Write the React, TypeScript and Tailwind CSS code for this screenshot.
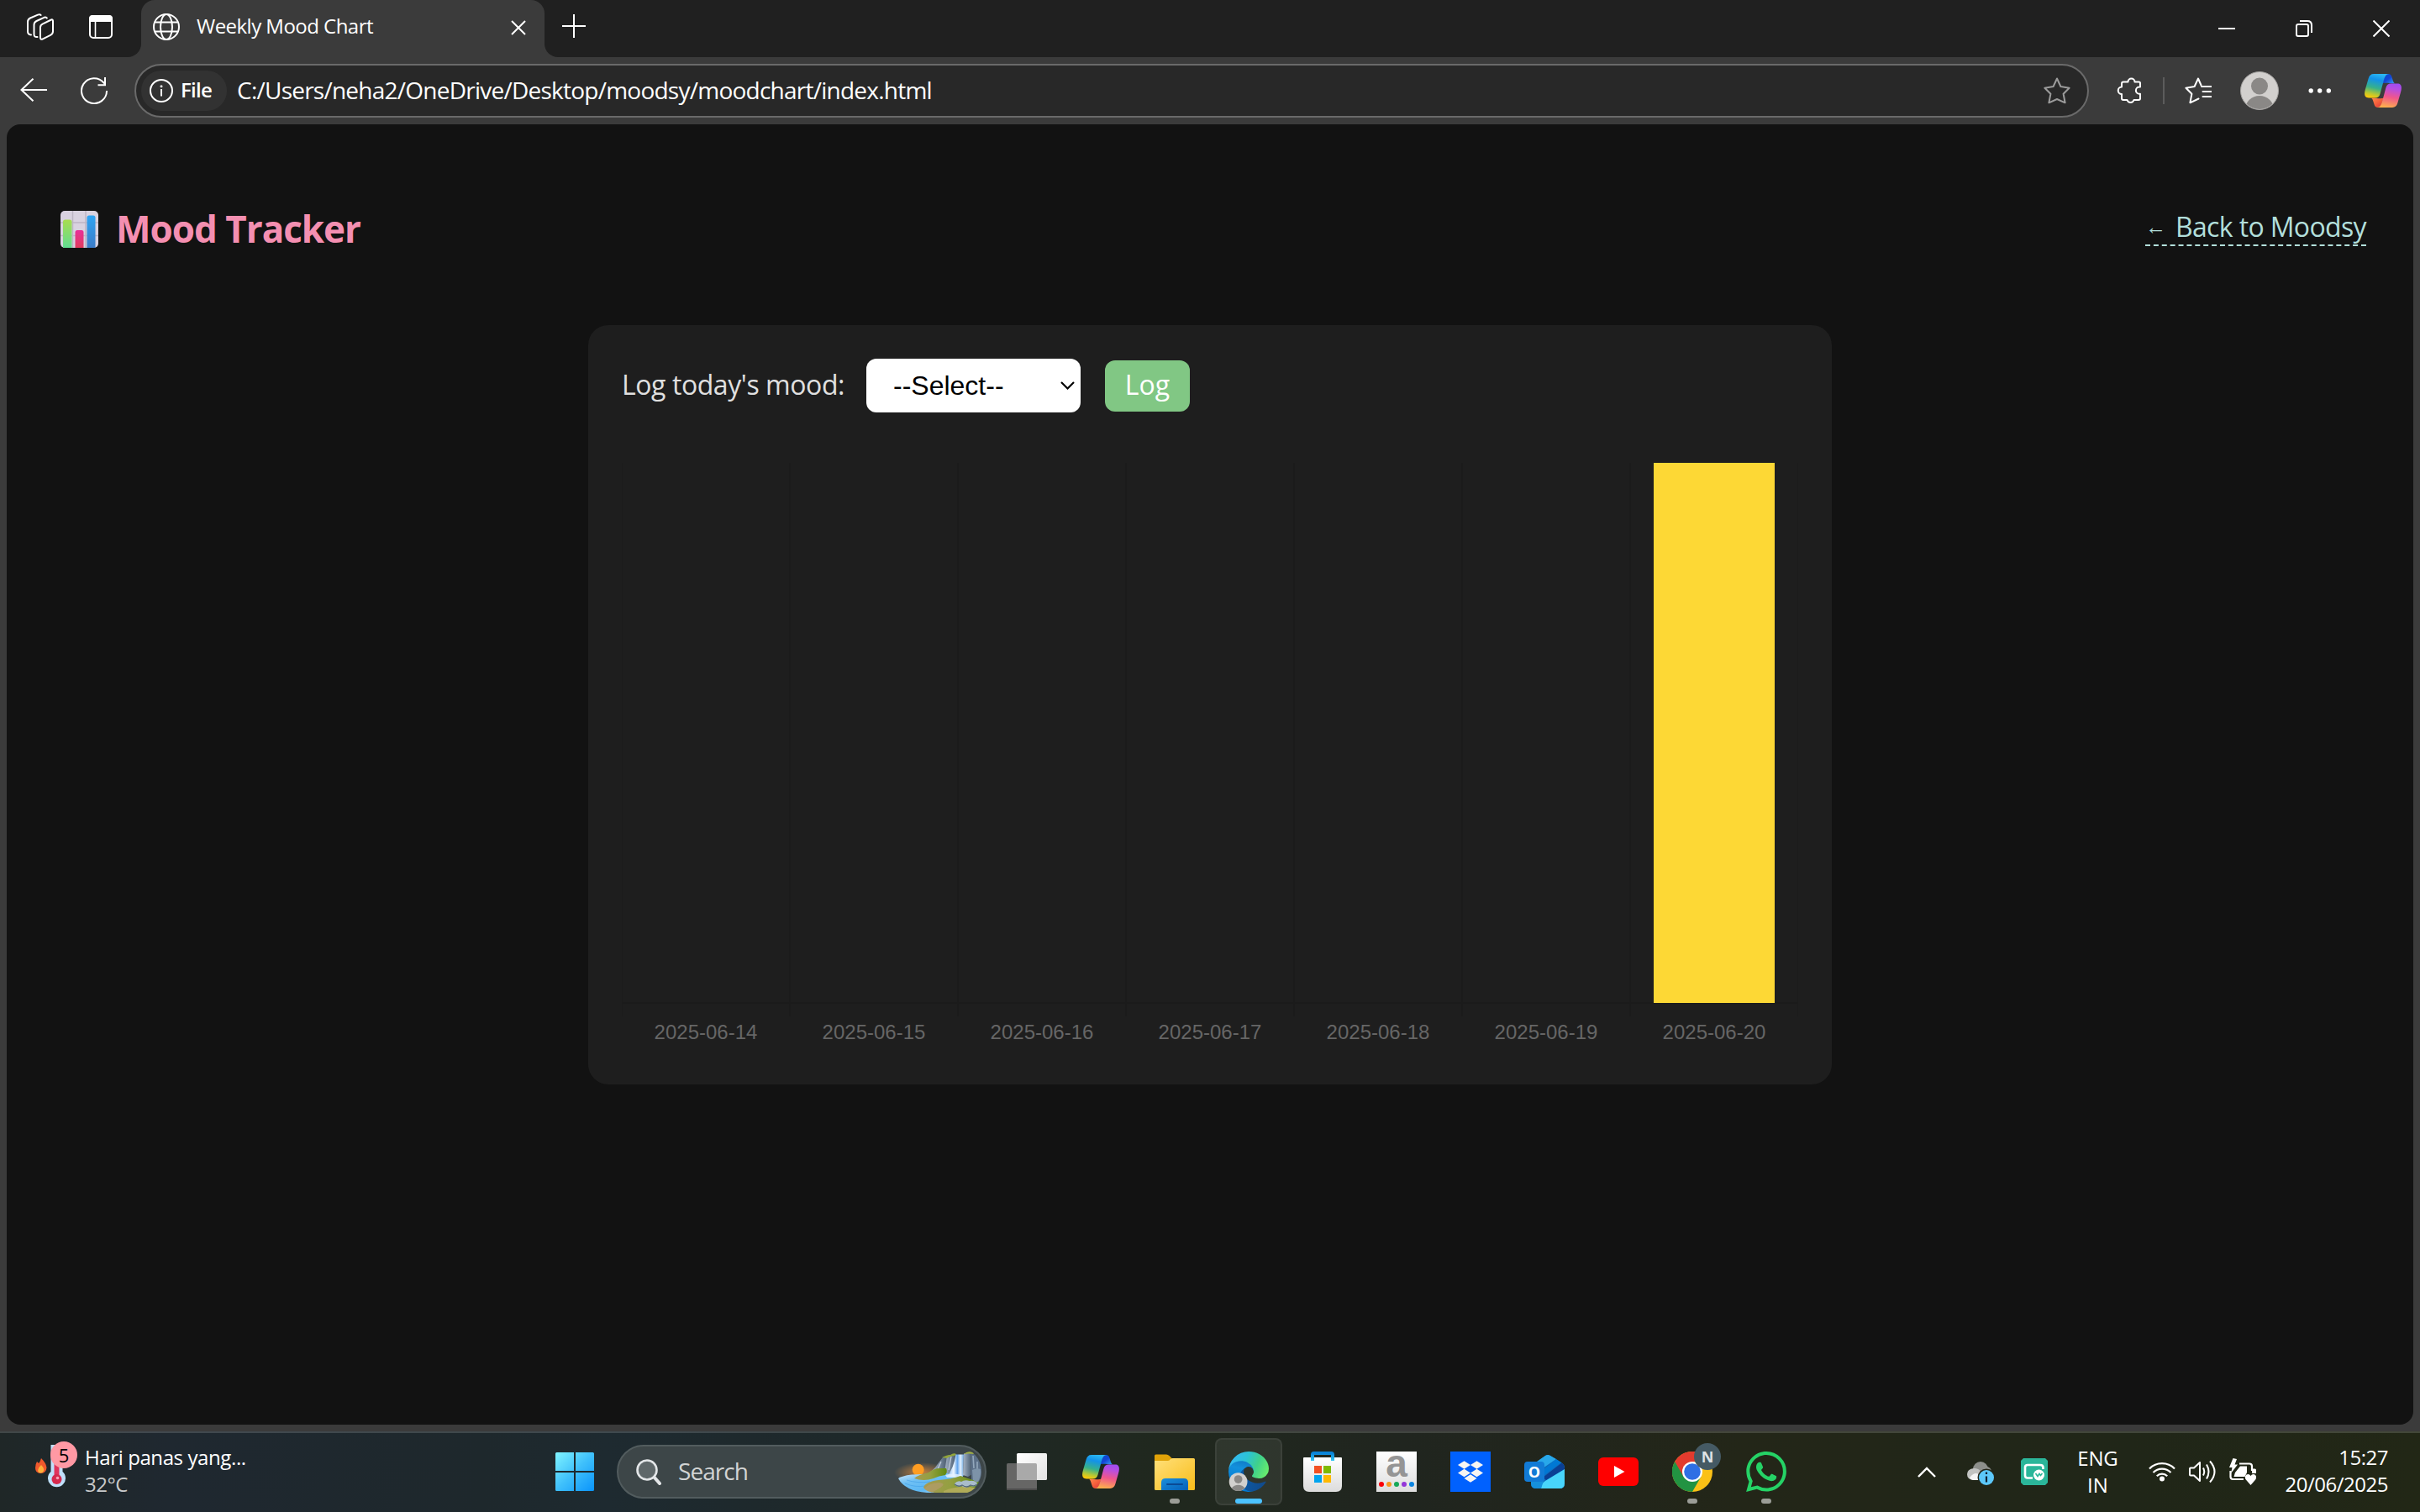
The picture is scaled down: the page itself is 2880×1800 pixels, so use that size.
import React from 'react';
import { SiDropbox, SiWhatsapp } from 'react-icons/si';

const days = [
  { date: '2025-06-14', level: 0 },
  { date: '2025-06-15', level: 0 },
  { date: '2025-06-16', level: 0 },
  { date: '2025-06-17', level: 0 },
  { date: '2025-06-18', level: 0 },
  { date: '2025-06-19', level: 0 },
  { date: '2025-06-20', level: 5 },
];

function CopilotLogo({ id, className }: { id: string; className: string }) {
  const lobe = 'M11 0C7.500 0 5.700 2 4.700 5.200L1 18C-.6 23.500-.6 28.400 5 28.400H12.500C16 28.400 17.600 26.600 18.600 23.400L22.500 9C23.800 4.200 25 0 29.500 0Z';
  const fold = 'M28 0C24.500 .2 23.200 5 21.500 11.200C25 10.200 31 11.500 36 11.300C34 10.300 33.800 7.500 32.600 4C31.800 1.500 30.800 0 28 0Z';
  return (
    <svg viewBox="0 0 44 40" className={className}>
      <defs>
        <linearGradient id={id + 'a'} x1="0.6" y1="0" x2="0.35" y2="1">
          <stop offset="0" stopColor="#2bb8f2" /><stop offset=".25" stopColor="#1392ea" /><stop offset=".6" stopColor="#37b18a" /><stop offset=".85" stopColor="#b9c832" /><stop offset="1" stopColor="#f8c80c" />
        </linearGradient>
        <linearGradient id={id + 'b'} x1="0" y1="0" x2="1" y2="1">
          <stop offset="0" stopColor="#0a4bc8" /><stop offset=".5" stopColor="#1446d6" /><stop offset="1" stopColor="#3aa5f5" />
        </linearGradient>
        <linearGradient id={id + 'c'} x1="0.4" y1="1" x2="0.6" y2="0">
          <stop offset="0" stopColor="#a24cf0" /><stop offset=".2" stopColor="#b84ee0" /><stop offset=".55" stopColor="#f0568c" /><stop offset="1" stopColor="#fdb04c" />
        </linearGradient>
        <linearGradient id={id + 'd'} x1="0" y1="0" x2="1" y2="1">
          <stop offset="0" stopColor="#d8303c" /><stop offset=".5" stopColor="#f4603c" /><stop offset="1" stopColor="#ff8a50" />
        </linearGradient>
      </defs>
      <path d={fold} fill={`url(#${id}b)`} />
      <path d={fold} fill={`url(#${id}d)`} transform="rotate(180 22 20)" />
      <path d={lobe} fill={`url(#${id}a)`} />
      <path d={lobe} transform="rotate(180 22 20)" fill={`url(#${id}c)`} />
    </svg>
  );
}

function TabStrip() {
  return (
    <div className="flex h-[68px] shrink-0 bg-[#202020] text-white">
      <div className="flex w-[168px] items-start pl-8 pt-4">
        <svg viewBox="0 0 32 32" className="h-8 w-8 shrink-0" fill="none" stroke="#fff" strokeWidth="2" strokeLinejoin="round" strokeLinecap="round">
          <path d="M29 7.500L19 12.400Q16 13.800 16 16.500V28.500Q16 32 19 30.300L28 25.800Q31 24.300 31 21.500V9Q31 6.600 29 7.500Z" />
          <path d="M12.500 28Q8.500 28.500 8.500 25V13.500Q8.500 10.500 11.500 9L20.500 4.800Q23 3.800 23.800 5.500" />
          <path d="M5 25.500Q1 25 1 21.500V10Q1 7 4 5.500L13 1.600Q15.500.6 16.600 2" />
        </svg>
        <svg viewBox="0 0 28 28" className="ml-[42px] mt-0.5 h-7 w-7 shrink-0" fill="none" stroke="#fff" strokeWidth="2">
          <rect x="1" y="1" width="26" height="26" rx="4" />
          <path d="M1 4Q1 1 4 1H24Q27 1 27 4V7H1Z" fill="#fff" />
          <path d="M7.500 7V27" strokeWidth="1.600" />
        </svg>
      </div>
      <div className="relative flex w-[480px] items-center rounded-t-2xl bg-[#3b3b3b] pb-1 pl-[14px]">
        <span className="absolute -left-4 bottom-0 h-4 w-4 bg-[#3b3b3b]"><span className="block h-4 w-4 rounded-br-2xl bg-[#202020]" /></span>
        <span className="absolute -right-4 bottom-0 h-4 w-4 bg-[#3b3b3b]"><span className="block h-4 w-4 rounded-bl-2xl bg-[#202020]" /></span>
        <svg viewBox="0 0 32 32" className="h-8 w-8 shrink-0" fill="none" stroke="#fff" strokeWidth="2">
          <circle cx="16" cy="16" r="15" />
          <ellipse cx="16" cy="16" rx="7" ry="15" />
          <path d="M2.500 10.500H29.500M2.500 21.500H29.500" />
        </svg>
        <span className="ml-5 whitespace-nowrap pb-[3px] text-[24px] leading-8 tracking-[-0.53px]">Weekly Mood Chart</span>
        <svg viewBox="0 0 18 18" className="ml-auto mr-[22px] mt-0.5 h-[18px] w-[18px]" stroke="#fff" strokeWidth="2"><path d="M1 1L17 17M17 1L1 17" /></svg>
      </div>
      <svg viewBox="0 0 28 28" className="ml-[21px] mt-[17px] h-7 w-7" stroke="#fff" strokeWidth="2"><path d="M14 0V28M0 14H28" /></svg>
      <div className="ml-auto mr-9 flex items-center gap-[72px]">
        <svg viewBox="0 0 20 20" className="h-5 w-5" stroke="#fff" strokeWidth="2"><path d="M0 10H20" /></svg>
        <svg viewBox="0 0 20 20" className="h-5 w-5" fill="none" stroke="#fff" strokeWidth="2">
          <rect x="1" y="5" width="14" height="14" rx="2" />
          <path d="M5 1.100H14Q19 1.100 19 6V15" />
        </svg>
        <svg viewBox="0 0 20 20" className="h-5 w-5" stroke="#fff" strokeWidth="2"><path d="M.5 .5L19.500 19.500M19.500 .5L.5 19.500" /></svg>
      </div>
    </div>
  );
}

function Toolbar() {
  return (
    <div className="flex h-20 shrink-0 items-center bg-[#3b3b3b] pl-6 text-white">
      <svg viewBox="0 0 32 28" className="mt-[-2px] h-7 w-8 shrink-0" fill="none" stroke="#fff" strokeWidth="2"><path d="M15.500 .7L1.500 14L15.500 27.300M1.500 14H32" /></svg>
      <svg viewBox="0 0 32 32" className="ml-10 h-8 w-8 shrink-0" fill="none" stroke="#fff" strokeWidth="2"><path d="M31 16A15 15 0 1 1 27.500 6.500L29 8.500M29 0V9.300H20.500" /></svg>
      <div className="ml-8 flex h-16 w-[2326px] shrink-0 items-center rounded-full border-2 border-[#6a6a6a] bg-[#282828] pl-1.5">
        <div className="flex h-12 w-[102px] items-center rounded-full bg-[#323232] pl-2.5">
          <svg viewBox="0 0 28 28" className="h-7 w-7 shrink-0" fill="none" stroke="#fff" strokeWidth="2"><circle cx="14" cy="14" r="13" /><path d="M14 12V20.500" /><circle cx="14" cy="8.800" r=".5" /></svg>
          <span className="ml-[9px] whitespace-nowrap pb-[3px] text-[24px] font-semibold leading-8 tracking-[-0.75px]">File</span>
        </div>
        <span className="ml-3 whitespace-nowrap pb-[3px] text-[28px] leading-9 tracking-[-0.76px]">C:/Users/neha2/OneDrive/Desktop/moodsy/moodchart/index.html</span>
        <svg viewBox="0 0 32 32" className="ml-auto mr-5 h-8 w-8" fill="none" stroke="#9b9b9b" strokeWidth="2" strokeLinejoin="round">
          <path d="M16 1.500L20.400 11L30.600 12.700L23.600 19.800L25.600 30.300L16 26L6.400 30.300L8.400 19.800L1.400 12.700L11.600 11Z" />
        </svg>
      </div>
      <svg viewBox="0 0 32 32" className="ml-8 h-8 w-8 shrink-0" fill="none" stroke="#fff" strokeWidth="2" strokeLinejoin="round">
        <path d="M7 11.500V7.500a2 2 0 0 1 2-2h5.500a4 4 0 0 1 8 0h5a1.500 1.500 0 0 1 1.500 1.500v4.600h-1a4.100 4.100 0 0 0 0 8.200h1v5.200a2 2 0 0 1-2 2h-5.500a4.200 4.200 0 0 1-8 0H9a2 2 0 0 1-2-2v-5a4.100 4.100 0 0 1 0-8.500z" />
      </svg>
      <div className="ml-6 h-8 w-0.5 shrink-0 bg-[#5c5c5c]" />
      <svg viewBox="0 0 32 32" className="ml-6 h-8 w-8 shrink-0" fill="none" stroke="#fff" strokeWidth="2" strokeLinejoin="round" strokeLinecap="round">
        <path d="M19.500 9.500L16 1.500L11.600 11L1.400 12.700L8.400 19.800L6.400 30.300L16.500 25.500" />
        <path d="M20 11H31.500M21.500 17H31.500M21.500 23H31.500" />
      </svg>
      <svg viewBox="0 0 46 46" className="ml-[34px] h-[46px] w-[46px] shrink-0">
        <defs><clipPath id="pf"><circle cx="23" cy="23" r="22" /></clipPath></defs>
        <circle cx="23" cy="23" r="22.500" fill="#d2d0ce" stroke="#a5a3a1" />
        <g clipPath="url(#pf)" fill="#8a8886"><circle cx="23" cy="17.500" r="10" /><ellipse cx="23" cy="45" rx="17" ry="16" /></g>
      </svg>
      <svg viewBox="0 0 28 8" className="ml-[35px] h-2 w-7 shrink-0" fill="#fff"><circle cx="3.200" cy="4" r="2.700" /><circle cx="13.700" cy="4" r="2.700" /><circle cx="24.300" cy="4" r="2.700" /></svg>
      <CopilotLogo id="tc" className="ml-[39px] h-10 w-11 shrink-0" />
    </div>
  );
}

function ChartEmoji() {
  return (
    <svg viewBox="0 0 45 44" className="h-11 w-[45px] shrink-0">
      <defs>
        <linearGradient id="eg" x1="0" y1="0" x2="0" y2="1"><stop offset="0" stopColor="#a8dc50" /><stop offset="1" stopColor="#62dc92" /></linearGradient>
        <linearGradient id="er" x1="0" y1="0" x2="0" y2="1"><stop offset="0" stopColor="#e8309a" /><stop offset="1" stopColor="#e03c5c" /></linearGradient>
        <linearGradient id="eb" x1="0" y1="0" x2="0" y2="1"><stop offset="0" stopColor="#2ea4f4" /><stop offset="1" stopColor="#3c7cc8" /></linearGradient>
      </defs>
      <rect width="45" height="44" rx="5" fill="#d9d2e0" />
      <path d="M14.500 0V44M30 0V44M0 14H45M0 29.500H45" stroke="#bdb5c4" strokeWidth="1.500" />
      <path d="M3 44V13Q3 10.500 5.500 10.500H11Q13.500 10.500 13.500 13V44Z" fill="url(#eg)" />
      <path d="M17.500 44V25.500Q17.500 23 20 23H25Q27.500 23 27.500 25.500V44Z" fill="url(#er)" />
      <path d="M31.500 44V8Q31.500 5.500 34 5.500H39Q41.500 5.500 41.500 8V44Z" fill="url(#eb)" />
    </svg>
  );
}

function MoodCard() {
  return (
    <section className="mx-auto mt-[87px] h-[904px] w-[1480px] shrink-0 rounded-3xl bg-[#1e1e1e] px-10 pt-10">
      <div className="flex h-16 items-center">
        <span className="whitespace-nowrap pb-0.5 text-[32px] leading-10 tracking-[-0.43px] text-[#e0e0e0]">Log today's mood:</span>
        <div className="ml-auto flex h-16 w-[255px] shrink-0 items-center rounded-xl bg-white pl-8 pr-[7px] font-['Liberation_Sans',Arial,sans-serif] text-[32px] leading-10 text-black">
          <span>--Select--</span>
          <svg viewBox="0 0 17 10" className="ml-auto h-2.5 w-[17px]" fill="none" stroke="#000" strokeWidth="2.200"><path d="M1 1L8.500 8.500L16 1" /></svg>
        </div>
        <button className="ml-[29px] mr-[724px] flex h-[61px] w-[101px] shrink-0 items-center justify-center rounded-xl bg-[#81c784] pb-0.5 text-[32px] leading-10 text-white">Log</button>
      </div>
      <div className="mt-[60px] flex h-[644px] w-[1400px] items-start border-b-2 border-l border-[#1b1b1b]">
        {days.map((d) => (
          <div key={d.date} className="flex h-[643px] w-[200px] shrink-0 items-end justify-center border-r-2 border-[#1b1b1b] last:w-[199px] last:border-r">
            <div className="w-36 bg-[#fdd835]" style={{ height: `${d.level * 20}%` }} />
          </div>
        ))}
      </div>
      <div className="flex h-[15px] w-[1400px] border-l border-[#1b1b1b]">
        {days.map((d) => <div key={d.date} className="w-[200px] shrink-0 border-r-2 border-[#1b1b1b] last:w-[199px] last:border-r" />)}
      </div>
      <div className="mt-[5px] flex font-['Liberation_Sans',Arial,sans-serif] text-[24px] leading-7 text-[#666]">
        {days.map((d) => <span key={d.date} className="w-[200px] shrink-0 text-center">{d.date}</span>)}
      </div>
    </section>
  );
}

function WaterfallArt() {
  return (
    <svg viewBox="0 0 101 49" className="h-[49px] w-[101px] overflow-visible">
      <defs>
        <radialGradient id="wg"><stop offset="0" stopColor="#ff9a3c" stopOpacity=".7" /><stop offset="1" stopColor="#ff9a3c" stopOpacity="0" /></radialGradient>
        <linearGradient id="wr" x1="0" y1="0" x2=".8" y2="1"><stop offset="0" stopColor="#d3e8fa" /><stop offset=".35" stopColor="#6fc0f4" /><stop offset=".7" stopColor="#5cb8f4" /><stop offset="1" stopColor="#b4ddf8" /></linearGradient>
        <linearGradient id="wf" x1="0" y1="0" x2="1" y2="0"><stop offset="0" stopColor="#7db6f0" /><stop offset=".4" stopColor="#eef7ff" /><stop offset=".62" stopColor="#62a4ec" /><stop offset=".8" stopColor="#e4f2ff" /><stop offset="1" stopColor="#6aa6e0" /></linearGradient>
        <linearGradient id="wk" x1="0" y1="0" x2="1" y2="0"><stop offset="0" stopColor="#a9b6c6" /><stop offset=".5" stopColor="#74869a" /><stop offset="1" stopColor="#48586a" /></linearGradient>
        <linearGradient id="wl" x1="0" y1="0" x2="1" y2="0"><stop offset="0" stopColor="#a89a52" /><stop offset=".5" stopColor="#93a040" /><stop offset="1" stopColor="#5f8a10" /></linearGradient>
      </defs>
      <ellipse cx="30" cy="25" rx="33" ry="12" fill="url(#wg)" />
      <circle cx="25.700" cy="21.700" r="7" fill="#ff9d22" />
      <path d="M2 32Q6 29 18 27.500L60 26H82L70 38L44 49H36Q10 47 2 32Z" fill="url(#wr)" />
      <path d="M12 34Q24 38 40 36M10 38Q22 43 34 41" stroke="#3f9fe8" strokeWidth="1" fill="none" opacity=".6" />
      <path d="M42 23L46 19L51 12L55 7L61 6L60 16L58 24Z" fill="url(#wk)" />
      <path d="M57 25L60 5L71 3V14L66 28Z" fill="url(#wk)" />
      <path d="M53 12L49 21M65 6L62 22" stroke="#c0cbd8" strokeWidth="1.300" />
      <path d="M54 7Q60 4 64 4Q68 1 71 3L69 5Q62 6 60 8Z" fill="#93a63a" />
      <path d="M70.500 3.500H80L79 30H60Q68 20 70.500 3.500Z" fill="url(#wf)" />
      <path d="M58 28Q66 25 78 28L76 31H60Z" fill="#e6f3ff" opacity=".8" />
      <path d="M80 2.500L90 1.500V27L85 30L79 28Z" fill="url(#wk)" />
      <path d="M89 3L93 3.500Q101 12 101 24Q101 32 96 39L89 34Z" fill="#5c7088" />
      <path d="M91 5L92 20M96 12L96 22" stroke="#93a8bc" strokeWidth="1.600" />
      <path d="M80 3Q85-1.500 91 1.500L92 3L86 2.500Z" fill="#a4b246" />
      <path d="M21 32Q25 28 38 25Q45 20 51 20L59 20Q61 24 58 28Q50 29 44 32Q32 36 21 32Z" fill="url(#wl)" />
      <path d="M32 43Q34 36 50 34Q66 33 76 29L88 33L98 36Q94 45 84 49H46Q36 48 32 43Z" fill="url(#wl)" />
      <path d="M33 44Q38 38 50 37Q60 38 52 43Q46 47 42 48.500Q35 47 33 44Z" fill="#b09c68" opacity=".8" />
      <path d="M56 47Q72 40 94 43Q90 47 84 49H56Z" fill="#b0ab58" />
      <path d="M90 22Q95 19 100 21Q101 31 96 37L91 34Z" fill="#7d93a8" />
      <path d="M69 38Q73 34 77 36Q81 33 87 35Q93 34 96 38Q95 43 88 41Q82 44 77 41Q70 43 69 38Z" fill="#a9bccb" />
      <path d="M69 39Q74 43 78 40Q84 44 88 40Q93 42 95.500 39" stroke="#55697a" strokeWidth="1.300" fill="none" />
    </svg>
  );
}

function EdgeLogo() {
  return (
    <svg viewBox="0 0 256 256" className="h-12 w-12">
      <defs>
        <linearGradient id="e1" x1=".2" y1=".5" x2="1" y2=".7"><stop offset="0" stopColor="#0c59a4" /><stop offset="1" stopColor="#114a8b" /></linearGradient>
        <linearGradient id="e2" x1=".6" y1="0" x2=".4" y2="1"><stop offset="0" stopColor="#1077c4" /><stop offset=".3" stopColor="#1390dc" /><stop offset=".7" stopColor="#0680d7" /><stop offset="1" stopColor="#0078d4" /></linearGradient>
        <linearGradient id="e3" x1="0" y1=".3" x2="1" y2=".6"><stop offset="0" stopColor="#35b9f8" /><stop offset=".4" stopColor="#2cc3d5" /><stop offset=".7" stopColor="#3fd08c" /><stop offset="1" stopColor="#66eb6e" /></linearGradient>
      </defs>
      <path fill="url(#e1)" d="M231 190.500c-3.400 1.800-6.900 3.400-10.500 4.700a101.500 101.500 0 0 1-35.900 6.400c-47.300 0-88.500-32.500-88.500-74.300a31.500 31.500 0 0 1 16.400-27.300c-42.800 1.800-53.800 46.400-53.800 72.500 0 74 68.100 81.400 82.800 81.400 7.900 0 19.800-2.300 27-4.600l1.300-.4a128.300 128.300 0 0 0 66.600-52.800 4 4 0 0 0-5.400-5.600Z" />
      <path fill="url(#e2)" d="M105.700 241.400a79.200 79.200 0 0 1-22.700-21.300 80.700 80.700 0 0 1 29.500-120c3.200-1.500 8.500-4.100 15.600-4a32.400 32.400 0 0 1 25.700 13 31.900 31.900 0 0 1 6.300 18.700c0-.2 24.500-79.600-80-79.600-43.900 0-80 41.600-80 78.200a130.200 130.200 0 0 0 12.100 56 128 128 0 0 0 156.400 67 75.500 75.500 0 0 1-62.800-8Z" />
      <path fill="url(#e3)" d="M152.300 148.900c-.9 1-3.400 2.500-3.400 5.600 0 2.600 1.700 5.200 4.800 7.300 14.300 10 41.400 8.600 41.500 8.600a59.600 59.600 0 0 0 30.300-8.300 61.400 61.400 0 0 0 30.400-52.900c.3-22.400-8-37.300-11.300-43.900C223.500 23.900 177.700 0 128 0A128 128 0 0 0 0 126.200c.5-36.500 36.800-66 80-66 3.500 0 23.500.3 42 10a72.600 72.600 0 0 1 30.900 29.300c6.100 10.600 7.200 24.100 7.200 29.500s-2.700 13.300-7.800 19.900Z" />
      <circle cx="62" cy="192" r="58" fill="#d2d0ce" />
      <circle cx="62" cy="176" r="26" fill="#8a8886" />
      <path d="M20 232A50 44 0 0 1 104 232A58 58 0 0 1 20 232Z" fill="#8a8886" />
    </svg>
  );
}

function TaskIcon({ children, mark = 'none' }: { children: React.ReactNode; mark?: 'none' | 'open' | 'active' }) {
  return (
    <div className={`relative flex h-20 w-20 shrink-0 items-center justify-center rounded-lg ${mark === 'active' ? 'border-2 border-white/[0.06] bg-white/[0.07]' : ''}`}>
      {children}
      {mark === 'open' && <span className="absolute left-[34px] top-[72px] h-1.5 w-3 rounded-full bg-[#9b9d97]" />}
      {mark === 'active' && <span className="absolute left-[22px] top-[70px] h-1.5 w-8 rounded-full bg-[#4cc2ff]" />}
    </div>
  );
}

function TaskIcons() {
  return (
    <div className="ml-2 flex gap-2">
      <TaskIcon>
        <svg viewBox="0 0 48 48" className="h-12 w-12">
          <defs><linearGradient id="tv" x1="0" y1="0" x2="1" y2="1"><stop offset="0" stopColor="#fff" /><stop offset="1" stopColor="#e2e2e2" /></linearGradient></defs>
          <rect x="0" y="14" width="36" height="32" rx="1.500" fill="#666665" />
          <rect x="12" y="2" width="36" height="32" rx="1.500" fill="url(#tv)" />
          <path d="M12 14H34.500Q36 14 36 15.500V34H13.500Q12 34 12 32.500Z" fill="#a9a9a9" />
          <path d="M0 45H36" stroke="#4c4c4c" strokeWidth="2" />
        </svg>
      </TaskIcon>
      <TaskIcon><CopilotLogo id="bc" className="h-10 w-11" /></TaskIcon>
      <TaskIcon mark="open">
        <svg viewBox="0 0 48 48" className="h-12 w-12">
          <defs>
            <linearGradient id="fo" x1="0" y1="0" x2="1" y2="1"><stop offset="0" stopColor="#ffe07a" /><stop offset="1" stopColor="#f9bd1a" /></linearGradient>
            <linearGradient id="fb" x1="0" y1="0" x2="1" y2="1"><stop offset="0" stopColor="#1a8fdc" /><stop offset="1" stopColor="#0560b8" /></linearGradient>
          </defs>
          <path d="M0 5Q0 3.500 1.500 3.500H14Q16 3.500 17.500 5L21 8.500V14H0Z" fill="#e0a208" />
          <path d="M0 11H15.500Q17.500 11 18.500 9.500Q19.500 8 21.500 8H46.500Q48 8 48 9.500V44.500Q48 46 46.500 46H1.500Q0 46 0 44.500Z" fill="url(#fo)" />
          <path d="M8 46V37Q8 32 13 32H35Q40 32 40 37V46Z" fill="url(#fb)" />
          <path d="M15 39H33" stroke="#0a4a94" strokeWidth="2" strokeLinecap="round" />
        </svg>
      </TaskIcon>
      <TaskIcon mark="active"><EdgeLogo /></TaskIcon>
      <TaskIcon>
        <svg viewBox="0 0 48 48" className="h-12 w-12">
          <defs>
            <linearGradient id="st" x1="0" y1="0" x2="0" y2="1"><stop offset="0" stopColor="#fff" /><stop offset="1" stopColor="#dcdcdc" /></linearGradient>
            <linearGradient id="sh" x1="0" y1="0" x2="0" y2="1"><stop offset="0" stopColor="#0a84d8" /><stop offset="1" stopColor="#35c8f4" /></linearGradient>
          </defs>
          <path d="M1 8Q1 7 2 7H46Q47 7 47 8V41Q47 48 40 48H8Q1 48 1 41Z" fill="url(#st)" />
          <path d="M12 11V3.500Q12 2 13.500 2H34.500Q36 2 36 3.500V11" fill="none" stroke="url(#sh)" strokeWidth="4" />
          <rect x="14" y="17" width="9" height="9" fill="#f25022" /><rect x="25" y="17" width="9" height="9" fill="#7fba00" />
          <rect x="14" y="28" width="9" height="9" fill="#00a4ef" /><rect x="25" y="28" width="9" height="9" fill="#ffb900" />
        </svg>
      </TaskIcon>
      <TaskIcon>
        <div className="flex h-12 w-12 flex-col items-center bg-gradient-to-b from-white to-[#dedede]">
          <span className="h-[36px] font-['Liberation_Sans',Arial,sans-serif] text-[46px] font-bold leading-[28px] text-[#959595]">a</span>
          <div className="flex gap-[3px]">
            <i className="h-1.5 w-1.5 rounded-full bg-[#fb0007]" /><i className="h-1.5 w-1.5 rounded-full bg-[#f8981d]" /><i className="h-1.5 w-1.5 rounded-full bg-[#17a858]" /><i className="h-1.5 w-1.5 rounded-full bg-[#9437d8]" /><i className="h-1.5 w-1.5 rounded-full bg-[#0b84e0]" />
          </div>
        </div>
      </TaskIcon>
      <TaskIcon><div className="flex h-12 w-12 items-center justify-center bg-[#0061fe]"><SiDropbox className="h-[30px] w-[30px] text-[#f7f5f2]" /></div></TaskIcon>
      <TaskIcon>
        <div className="relative h-12 w-12">
          <svg viewBox="0 0 48 48" className="h-12 w-12">
            <path d="M8 17L25 5Q28 3 31 5L44 13Q48 15.500 48 19V38Q48 44 42 44H14Q8 44 8 38Z" fill="#0f6cbd" />
            <path d="M8 17L25 5Q28 3 31 5L38 9L16 24H8Z" fill="#28a8ea" />
            <path d="M20 24L38 9L44 13L24 28Z" fill="#0078d4" />
            <path d="M22 31L44.500 13.500Q48 15.500 48 21L26 34Z" fill="#0a3f94" />
            <path d="M48 21V38Q48 44 42 44H20Q20 38 25 35Z" fill="#48d5fb" />
            <path d="M8 32H24L20 44H14Q8 44 8 38Z" fill="#1590dc" />
          </svg>
          <span className="absolute left-0 top-3 flex h-6 w-6 items-center justify-center rounded-sm bg-[#127bd6] text-[18px] font-bold leading-none">O</span>
        </div>
      </TaskIcon>
      <TaskIcon>
        <svg viewBox="0 0 48 48" className="h-12 w-12"><rect y="7" width="48" height="34" rx="6" fill="#f00" /><path d="M19 17L31.500 24L19 31Z" fill="#fff" /></svg>
      </TaskIcon>
      <TaskIcon mark="open">
        <svg viewBox="0 0 48 48" className="h-12 w-12">
          <circle cx="24" cy="24" r="24" fill="#fbc116" />
          <path d="M24 24L3.200 12A24 24 0 0 0 24 48L34.400 30Z" fill="#229342" />
          <path d="M3.200 12A24 24 0 0 1 44.800 12H24L13.600 30Z" fill="#e33b2e" />
          <circle cx="24" cy="24" r="12" fill="#fff" /><circle cx="24" cy="24" r="9.800" fill="#2f6fe4" />
        </svg>
        <span className="absolute left-[42px] top-[6px] flex h-8 w-8 items-center justify-center rounded-full bg-[#455a64] text-[18px] font-bold leading-none text-[#dfe3e6]">N</span>
      </TaskIcon>
      <TaskIcon mark="open"><SiWhatsapp className="h-12 w-12 text-[#25d366]" /></TaskIcon>
    </div>
  );
}

function Taskbar() {
  return (
    <div className="flex h-24 shrink-0 items-center border-t-2 border-white/15 bg-[linear-gradient(90deg,#1f2727_0%,#1f2830_7%,#1e282c_20%,#1e2a30_25%,#1e2829_36%,#20281e_48%,#20251f_58%,#232618_72%,#202618_88%,#222716_100%)] pb-0.5 text-white">
      <div className="relative mb-5 ml-[42px] h-[60px] w-[59px] shrink-0">
        <svg viewBox="0 0 48 60" className="h-[60px] w-12">
          <path d="M7 24Q13 30 13.500 35Q13 42 6.500 42Q0 42 0 35.500Q0 31 2 28L4 30Q6 28 7 24Z" fill="#f0592c" />
          <path d="M7 32Q11 36 10 39Q9 41.500 6.500 41.500Q3 41.500 3.200 38Q3.500 35 7 32Z" fill="#ffb03a" />
          <path d="M18.500 8H32.500V40A10.500 10.500 0 1 1 18.500 40Z" fill="#bfe0fb" />
          <path d="M22.500 20H28.500V44H22.500Z" fill="#e0335c" /><circle cx="25.500" cy="49" r="6" fill="#d5294e" /><circle cx="26.500" cy="47.500" r="1.800" fill="#f7a0b4" />
        </svg>
        <span className="absolute left-[18px] top-[4px] flex h-8 w-8 items-center justify-center rounded-full bg-[#ff99a4] text-[22px] leading-none text-black">5</span>
      </div>
      <div className="mb-[3px] flex w-[560px] flex-col text-[24px] leading-8">
        <span className="whitespace-nowrap tracking-[-0.4px]">Hari panas yang...</span>
        <span className="tracking-[-0.46px] text-[#c8cacb]">32°C</span>
      </div>
      <svg viewBox="0 0 46 46" className="h-[46px] w-[46px] shrink-0">
        <defs><linearGradient id="wn" gradientUnits="userSpaceOnUse" x1="0" y1="0" x2="46" y2="46"><stop offset="0" stopColor="#80f4ff" /><stop offset=".5" stopColor="#3fc0fb" /><stop offset="1" stopColor="#0a94fb" /></linearGradient></defs>
        <path d="M1.500 0H22V22H0V1.500Q0 0 1.500 0ZM24 0H44.500Q46 0 46 1.500V22H24ZM0 24H22V46H1.500Q0 46 0 44.500ZM24 24H46V44.500Q46 46 44.500 46H24Z" fill="url(#wn)" />
      </svg>
      <div className="ml-[27px] flex h-16 w-[440px] shrink-0 items-center rounded-full border-2 border-[#525c5e] bg-[#3d4648] pl-[21px]">
        <svg viewBox="0 0 30 32" className="h-8 w-[30px]" fill="#5f686a" stroke="#e3e6e8"><path d="M21 22L28 30" strokeWidth="4" strokeLinecap="round" /><circle cx="13" cy="14" r="11.500" strokeWidth="2.600" /></svg>
        <span className="mb-0.5 ml-5 text-[28px] leading-9 tracking-[-0.94px] text-[#d2d4d4]">Search</span>
        <div className="ml-auto mr-1"><WaterfallArt /></div>
      </div>
      <TaskIcons />
      <div className="ml-auto flex h-full items-center">
        <svg viewBox="0 0 22 13" className="h-[13px] w-[22px]" fill="none" stroke="#fff" strokeWidth="2.400"><path d="M1 12L11 2L21 12" /></svg>
        <svg viewBox="0 0 32 28" className="ml-[37px] mt-1 h-7 w-8">
          <circle cx="16" cy="9" r="9" fill="#8d8f8b" /><circle cx="23" cy="12" r="6" fill="#8d8f8b" />
          <path d="M8 8Q14 7 18 14L14 22H7Q0 21 0 15Q0 9 8 8Z" fill="#c2c3c1" /><path d="M3 19Q10 10 17 17L13 22H7Q4 21.500 3 19Z" fill="#f4f4f4" />
          <circle cx="23" cy="19" r="10.500" fill="#23261a" /><circle cx="23" cy="19" r="9" fill="#5cc8fa" />
          <path d="M23 17.500V24.500M23 12.500V15" stroke="#123" strokeWidth="2.200" />
        </svg>
        <svg viewBox="0 0 32 32" className="ml-8 h-8 w-8">
          <path d="M3 0H29L32 3V29L29 32H3L0 29V3Z" fill="#2bb69a" />
          <path d="M14 23.500H8Q5 23.500 5 20.500V11Q5 8 8 8H23Q26.500 8 26.500 11V13" fill="none" stroke="#fff" strokeWidth="2.600" />
          <circle cx="21.500" cy="20" r="6.500" fill="#fff" /><path d="M17.500 18L20 21.500L22 18.500L23.500 20.500L25.500 18" fill="none" stroke="#2bb69a" strokeWidth="1.600" />
        </svg>
        <div className="ml-[35px] flex w-[49px] flex-col items-center text-[24px] leading-8"><span className="tracking-[-0.2px]">ENG</span><span>IN</span></div>
        <svg viewBox="0 0 32 24" className="ml-9 h-6 w-8" fill="none" stroke="#fff" strokeWidth="2.200"><path d="M1 8.500A21 21 0 0 1 31 8.500M5.500 13A14.600 14.600 0 0 1 26.500 13M9.800 17.200A8.600 8.600 0 0 1 22.200 17.200" /><circle cx="16" cy="20.500" r="3" fill="#fff" stroke="none" /></svg>
        <svg viewBox="0 0 32 28" className="ml-4 h-7 w-8" fill="none" stroke="#fff" strokeWidth="2" strokeLinejoin="round"><path d="M1 10.500Q1 9.500 2 9.500H6L13 3V25L6 18.500H2Q1 18.500 1 17.500Z" /><path d="M17 9.500Q19.500 14 17 18.500M21 5.500Q26 14 21 22.500M25 1.500Q36 14 25 26.500" /></svg>
        <svg viewBox="0 0 32 32" className="ml-4 h-8 w-8" fill="#fff">
          <path d="M12 6.500H24Q27 6.500 27 9.500V15M1.500 15V22Q1.500 25 4.500 25H17" fill="none" stroke="#fff" strokeWidth="2.200" />
          <path d="M27 12.500H30.500Q32 12.500 32 14V18H27Z" />
          <path d="M4.500 0L0 11H3.500L2 18L10 7.500H6.500L9 1Z" />
          <path d="M13 9.500H21V17L18.500 22H5.500L7 17Z" />
          <path d="M25.500 32L19.800 25.500Q17.500 22 20.500 19.500Q23.500 18 25.500 21Q27.500 18 30.500 19.500Q33.300 22 31.200 25.500Z" />
        </svg>
        <div className="mb-0.5 ml-[33px] mr-[38px] flex w-[124px] flex-col items-end whitespace-nowrap text-[24px] leading-8 tracking-[-0.5px]"><span>15:27</span><span>20/06/2025</span></div>
      </div>
    </div>
  );
}

export default function App() {
  return (
    <div className="flex h-[1800px] w-[2880px] flex-col overflow-hidden bg-[#3b3b3b] font-['Open_Sans','Noto_Sans',sans-serif]">
      <TabStrip />
      <Toolbar />
      <main className="mx-2 flex h-[1548px] shrink-0 flex-col rounded-2xl bg-[#121212]">
        <header className="flex items-center justify-between pl-16 pr-14 pt-[98px]">
          <div className="flex h-[54px] items-center">
            <ChartEmoji />
            <h1 className="ml-[21px] whitespace-nowrap pb-0.5 text-[44px] font-bold leading-[54px] tracking-[-1.01px] text-[#f48fb1]">Mood Tracker</h1>
          </div>
          <a className="mb-1 flex h-[44px] items-center whitespace-nowrap border-b-2 border-dashed border-[#b2dfdb] text-[32px] leading-10 text-[#b2dfdb]">
            <span className="w-9 font-['Liberation_Sans',sans-serif] text-[25px]">←</span><span className="tracking-[-0.64px]">Back to Moodsy</span>
          </a>
        </header>
        <MoodCard />
      </main>
      <div className="h-2 shrink-0" />
      <Taskbar />
    </div>
  );
}
